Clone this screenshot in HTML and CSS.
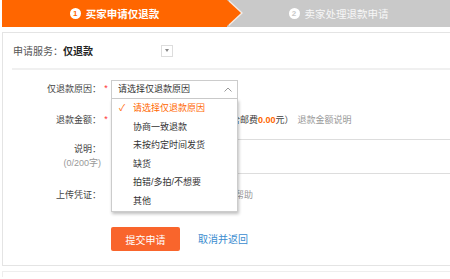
FILE: index.html
```html
<!DOCTYPE html>
<html lang="zh-CN">
<head>
  <meta charset="UTF-8">
  <title>申请仅退款</title>
  <meta name="viewport" content="width=device-width, initial-scale=1.0">
  <link rel="stylesheet" href="styles.css">
</head>
<body>
  <div class="page">
    <div class="steps">
      <div class="step step-active"><span class="num">1</span>买家申请仅退款</div>
      <div class="step step-next"><span class="num">2</span>卖家处理退款申请</div>
    </div>

    <div class="panel">
      <div class="panel-head">
        <span class="service-label">申请服务：</span><span class="service-name">仅退款</span>
        <span class="toggle"><span class="toggle-arrow"></span></span>
      </div>

      <div class="form">
        <div class="row row-reason">
          <span class="lbl">仅退款原因：</span><span class="req">*</span>
          <div class="select-wrap">
            <div class="select">
              请选择仅退款原因
              <svg class="caret" width="8" height="5" viewBox="0 0 8 5"><path d="M0.5 4.5 L4 1 L7.5 4.5" fill="none" stroke="#999" stroke-width="1"/></svg>
            </div>
            <ul class="options">
              <li class="selected"><span class="check">✓</span>请选择仅退款原因</li>
              <li>协商一致退款</li>
              <li>未按约定时间发货</li>
              <li>缺货</li>
              <li>拍错/多拍/不想要</li>
              <li>其他</li>
            </ul>
          </div>
        </div>

        <div class="row row-amount">
          <span class="lbl">退款金额：</span><span class="req">*</span>
          <input class="amount-input" type="text">
          <span class="amount-note">（含邮费<b class="fee">0.00</b>元）</span>
          <span class="hint">退款金额说明</span>
        </div>

        <div class="row row-desc">
          <div class="lbl lbl-desc">说明：<span class="count">(0/200字)</span></div><span class="req"></span>
          <div class="textarea"></div>
        </div>

        <div class="row row-upload">
          <span class="lbl">上传凭证：</span><span class="req"></span>
          <span class="upload-btn"></span>
          <span class="hint">查看帮助</span>
        </div>

        <div class="row row-actions">
          <span class="lbl"></span><span class="req"></span>
          <button class="submit">提交申请</button>
          <a class="cancel" href="#">取消并返回</a>
        </div>
      </div>
    </div>

    <div class="panel panel-next"></div>
  </div>
</body>
</html>
```

FILE: styles.css
```css
:root {
  --orange: #ff6600;
  --btn: #f9652c;
  --gray-step: #c9c9c9;
  --border: #e4e4e4;
  --text: #3c3c3c;
  --muted: #999;
  --link: #3a8ccf;
}

html, body {
  margin: 0;
  padding: 0;
  overflow: hidden;
}

body {
  background: #fff;
  color: var(--text);
  font-family: "Liberation Sans", "Noto Sans CJK SC", sans-serif;
  font-size: 9px;
}

.page {
  margin-left: 2px;
}

/* step bar */
.steps {
  display: flex;
  height: 27px;
  background: var(--gray-step);
}

.step {
  display: flex;
  align-items: center;
  justify-content: center;
  color: #fff;
  font-size: 10.5px;
}

.step-active {
  width: 225px;
  background: var(--orange);
  font-weight: bold;
  position: relative;
  z-index: 1;
}

.step-active::before,
.step-active::after {
  content: "";
  position: absolute;
  top: 0;
  left: 100%;
  border-top: 13.5px solid transparent;
  border-bottom: 13.5px solid transparent;
}

.step-active::before {
  border-left: 14px solid #f4ece6;
  margin-left: 2px;
}

.step-active::after {
  border-left: 14px solid var(--orange);
}

.step-next {
  flex: 1;
  color: #f7f7f7;
}

.num {
  display: inline-flex;
  align-items: center;
  justify-content: center;
  width: 11px;
  height: 11px;
  border-radius: 50%;
  background: #fff;
  color: var(--orange);
  font-size: 8px;
  font-weight: bold;
  margin-right: 5px;
}

.step-next .num {
  color: var(--gray-step);
}

/* panel */
.panel {
  width: 448px;
  box-sizing: border-box;
  margin-top: 5px;
  border: 1px solid var(--border);
  border-right: none;
}

.panel-head {
  display: flex;
  align-items: center;
  height: 35px;
  margin: 0 0 0 9px;
  padding-left: 1px;
  border-bottom: 2px solid #f0f0f0;
  font-size: 10px;
}

.service-label {
  color: #555;
}

.service-name {
  font-weight: bold;
  color: #222;
}

.toggle {
  display: inline-flex;
  align-items: center;
  justify-content: center;
  width: 10px;
  height: 10px;
  margin-left: 68px;
  border: 1px solid #ddd;
}

.toggle-arrow {
  border-left: 2.5px solid transparent;
  border-right: 2.5px solid transparent;
  border-top: 3px solid #888;
}

.form {
  padding: 10px 0 14px;
}

.row {
  display: flex;
  align-items: center;
  line-height: 19px;
}

.lbl {
  width: 98px;
  text-align: right;
  color: #444;
}

.req {
  width: 10px;
  text-align: center;
  color: #f33;
  align-self: flex-start;
  line-height: 17px;
}

.row-amount { margin-top: 12px; }
.row-desc { margin-top: 9px; align-items: flex-start; }
.row-upload { margin-top: 12px; }
.row-actions { margin-top: 22px; }

/* select + dropdown */
.select-wrap {
  position: relative;
  z-index: 2;
}

.select {
  box-sizing: border-box;
  width: 127px;
  height: 19px;
  line-height: 17px;
  padding-left: 6px;
  border: 1px solid #ccc;
  color: #333;
  position: relative;
}

.caret {
  position: absolute;
  right: 5px;
  top: 6px;
}

.options {
  position: absolute;
  top: 19px;
  left: 0;
  box-sizing: border-box;
  width: 127px;
  margin: 0;
  padding: 0;
  list-style: none;
  background: #fff;
  border: 1px solid #ccc;
  border-top: none;
  box-shadow: 1px 2px 3px rgba(0, 0, 0, 0.25);
}

.options li {
  height: 18.6px;
  line-height: 18.6px;
  padding-left: 21px;
  color: #333;
  position: relative;
}

.options .selected {
  color: var(--orange);
}

.check {
  position: absolute;
  left: 7px;
  top: 0;
  font-size: 9px;
}

/* amount */
.amount-input {
  box-sizing: border-box;
  width: 109px;
  height: 19px;
  margin: 0 2px 0 0;
  border: 1px solid #ccc;
  padding: 0;
}

.fee {
  color: var(--orange);
  font-weight: bold;
}

.hint {
  color: var(--muted);
  margin-left: 4px;
}

/* description */
.lbl-desc {
  line-height: 14px;
  padding-top: 3px;
}

.count {
  display: block;
  color: var(--muted);
}

.textarea {
  box-sizing: border-box;
  flex: 1;
  height: 35px;
  border: 1px solid #ddd;
  border-right: none;
}

/* upload */
.upload-btn {
  box-sizing: border-box;
  width: 102px;
  height: 19px;
  border: 1px solid #ccc;
}

/* actions */
.submit {
  width: 69px;
  height: 24px;
  padding: 0;
  border: none;
  border-radius: 2px;
  background: var(--btn);
  color: #fff;
  font-family: inherit;
  font-size: 10px;
  cursor: pointer;
}

.cancel {
  margin-left: 18px;
  color: var(--link);
  font-size: 10px;
  text-decoration: none;
}

.panel-next {
  height: 6px;
  margin-top: 5px;
  border-color: #eee;
  border-bottom: none;
}
```
